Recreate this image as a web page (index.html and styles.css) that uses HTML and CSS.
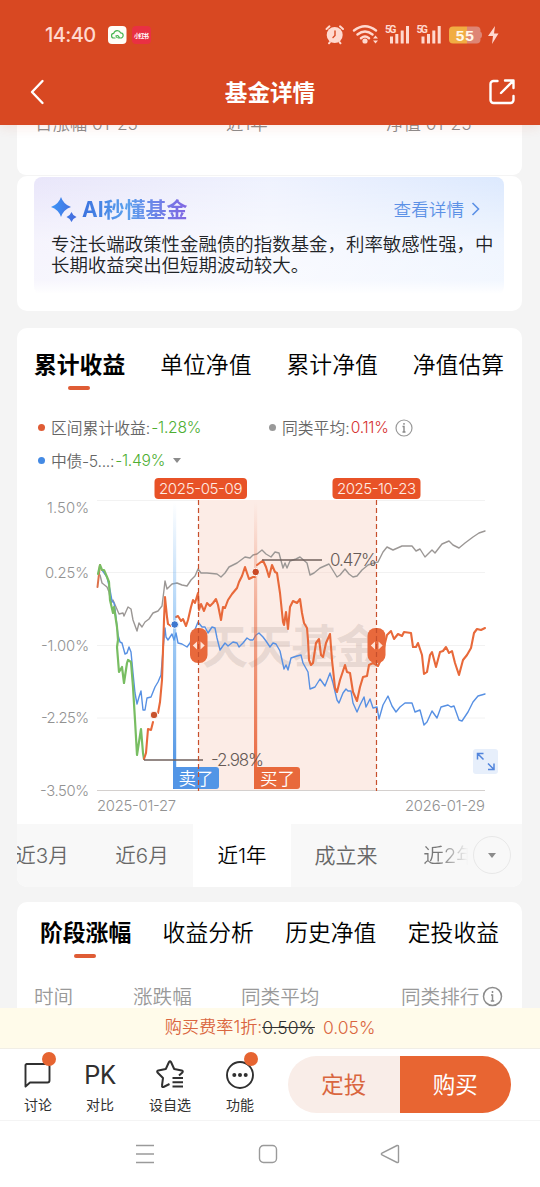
FILE: index.html
```html
<!DOCTYPE html>
<html lang="zh-CN">
<head>
<meta charset="utf-8">
<title>基金详情</title>
<link rel="stylesheet" href="styles.css">
</head>
<body>
<div class="screen">
  <header class="header">
    <div class="status">
      <span class="clock">14:40</span>
      <svg class="apps" width="44" height="20" viewBox="0 0 44 20">
        <rect x="0" y="1" width="18.500" height="18" rx="4" fill="#fffdf8"/>
        <path d="M7.500 13H6a2.300 2.300 0 0 1-.3-4.600a3.700 3.700 0 0 1 7-.5a2.500 2.500 0 0 1-.2 5.100h-2q-2.200 0-2.600-2q1.600-1.200 2.600.4l1 1.300" fill="none" stroke="#49b653" stroke-width="1.200"/>
        <rect x="24" y="1" width="19" height="18" rx="4" fill="#e93043"/>
        <text x="26" y="12.500" class="app-label" textLength="15">小红书</text>
      </svg>
      <svg class="signals" width="180" height="24" viewBox="320 23 180 24">
        <g fill="none" stroke="#ffd9cf" stroke-width="2" stroke-linecap="round">
          <circle cx="334.700" cy="35" r="8" fill="#ffd9cf" stroke="none"/>
          <path d="M326.500 29l3-2.700M343 29l-3-2.700M330 42l-1 1.300M339.500 42l1 1.300"/>
          <path d="M335 31v4.500l-2 2" stroke="#d84822" stroke-width="1.400"/>
          <path stroke-width="2.400" d="M354 30.500q11-8.500 22 0M357.500 34.500q7.500-6 15 0M361 38.200q4-3.200 8 0"/>
          <circle cx="365" cy="41" r="1.600" fill="#ffd9cf"/>
        </g>
        <g fill="#ffd9cf">
          <path d="M373 38.500l2.500-3 2.500 3zM373 40.500l2.500 3 2.500-3z"/>
          <rect x="390" y="36.500" width="3" height="7"/><rect x="395.300" y="34" width="3" height="9.500"/><rect x="400.700" y="30.500" width="3" height="13"/><rect x="406" y="26" width="3" height="17.500"/>
          <rect x="421.500" y="36.500" width="3" height="7"/><rect x="427" y="34" width="3" height="9.500"/><rect x="432.300" y="30.500" width="3" height="13"/><rect x="437.700" y="26" width="3" height="17.500"/>
          <text x="385" y="33" class="net" textLength="11.500">5G</text>
          <text x="416.500" y="33" class="net" textLength="11.500">5G</text>
          <path d="M495 26l-7 10h5l-1 8 6.500-10.500h-4.500z"/>
        </g>
        <path d="M467 26.500h9.500a4 4 0 0 1 4 4v1.500q1.500 0 1.500 3t-1.500 3v1.500a4 4 0 0 1-4 4H467z" fill="#de8675"/>
        <path d="M453 26.500h14v17h-14a4 4 0 0 1-4-4v-9a4 4 0 0 1 4-4z" fill="#f1ad43"/>
        <text x="455.800" y="40.700" class="battery" textLength="18">55</text>
      </svg>
    </div>
    <div class="titlebar">
      <svg width="16" height="26" viewBox="0 0 16 26"><path d="M13.500 2L3 13 13.500 24" fill="none" stroke="#fff" stroke-width="2.400" stroke-linecap="round" stroke-linejoin="round"/></svg>
      <h1>基金详情</h1>
      <svg width="26" height="26" viewBox="0 0 26 26"><path d="M8.500 2H4.500a3 3 0 0 0-3 3v16a3 3 0 0 0 3 3h17a3 3 0 0 0 3-3v-4M12 14L24 2M16 1.500h8.500V9" fill="none" stroke="#fff" stroke-width="2.400" stroke-linecap="round" stroke-linejoin="round"/></svg>
    </div>
  </header>

  <main class="content">
    <section class="card summary">
      <div class="summary-row"><span class="s1">日涨幅 01-25</span><span class="s2">近1年</span><span>净值 01-25</span></div>
    </section>

    <section class="card ai">
      <div class="ai-box">
        <div class="ai-head">
          <svg width="26" height="25" viewBox="0 0 26 25"><defs><linearGradient id="star"><stop stop-color="#3d96f7"/><stop offset="1" stop-color="#4569dc"/></linearGradient></defs><path d="M10 0q2.500 7.500 10 10-7.500 2.500-10 10-2.500-7.500-10-10 7.500-2.500 10-10zM20.500 15q1.300 3.700 5 5-3.700 1.300-5 5-1.300-3.700-5-5 3.700-1.300 5-5z" fill="url(#star)"/></svg>
          <strong>AI秒懂基金</strong>
          <span class="more">查看详情</span>
          <svg width="9" height="14" viewBox="0 0 9 14"><path d="M1.500 1l6 6-6 6" fill="none" stroke="#5c91e6" stroke-width="1.600"/></svg>
        </div>
        <p>专注长端政策性金融债的指数基金，利率敏感性强，中长期收益突出但短期波动较大。</p>
      </div>
    </section>

    <section class="card performance">
      <nav class="tabs">
        <span class="active">累计收益</span><span>单位净值</span><span>累计净值</span><span>净值估算</span>
      </nav>
      <div class="legend">
        <div class="legend-item first"><i class="dot red"></i><span>区间累计收益:</span><b class="down">-1.28%</b></div>
        <div class="legend-item"><i class="dot gray"></i><span>同类平均:</span><b class="up">0.11%</b>
          <svg class="info" width="18" height="18" viewBox="0 0 18 18"><circle cx="9" cy="9" r="8" fill="none" stroke="#999" stroke-width="1.200"/><path d="M7.500 7.500H9V13M7.500 13h3M9 4v1.700" fill="none" stroke="#888" stroke-width="1.400"/></svg>
        </div>
      </div>
      <div class="legend second">
        <div class="legend-item"><i class="dot blue"></i><span class="bond">中债-5...:</span><b class="down">-1.49%</b><i class="caret"></i></div>
      </div>
      <svg class="chart" width="505" height="349" viewBox="17 475 505 349">
        <defs>
          <linearGradient id="sell" x1="0" y1="0" x2="0" y2="1"><stop stop-color="#58a4ee" stop-opacity="0"/><stop offset=".4" stop-color="#58a4ee" stop-opacity=".5"/><stop offset="1" stop-color="#458be0"/></linearGradient>
          <linearGradient id="buy" x1="0" y1="0" x2="0" y2="1"><stop stop-color="#e8643a" stop-opacity="0"/><stop offset=".4" stop-color="#e8643a" stop-opacity=".5"/><stop offset="1" stop-color="#e8643a"/></linearGradient>
        </defs>
        <path d="M97 500.500H485M97 572.500H485M97 645.500H485M97 718H485" stroke="#f2f2f2" fill="none"/>
        <rect x="198.500" y="500" width="178" height="290" fill="#fcece6"/>
        <path d="M199 572.500H376M199 645.500H376M199 718H376" stroke="#f5e3dd" fill="none"/>
        <path d="M97 790.500H485" stroke="#d4d0ce"/>
        <text class="watermark" x="202" y="663" textLength="180">天天基金</text>
        <g class="axis">
          <text x="47" y="512.500" textLength="42">1.50%</text>
          <text x="45" y="578" textLength="44">0.25%</text>
          <text x="41" y="650.500" textLength="48">-1.00%</text>
          <text x="41" y="723" textLength="48">-2.25%</text>
          <text x="40" y="795.500" textLength="49">-3.50%</text>
          <text x="97" y="810.500" textLength="79">2025-01-27</text>
          <text x="405" y="810.500" textLength="80">2026-01-29</text>
        </g>
        <g fill="none" stroke-linejoin="round" stroke-linecap="round">
          <polyline stroke="#9b9795" stroke-width="1.400" points="100,575 102,583 107,587 109,592 111,603 113,600 116,607 119,614 123,613 124,616 128,607 131,609 133,620 137,631 139,623 142,627 145,622 149,619 153,613 158,611 162,606 164,590 165,581 167,589 172,584 177,583 182,585 187,586 191,580 195,576 198,569 201,573 207,573 217,574 221,577 225,573 229,567 237,563 245,557 250,558 253,555 257,554 262,550 266,554 271,557 275,552 279,553 283,568 285,563 287,568 290,561 296,559 300,557 307,563 310,575 314,573 320,568 329,564 337,577 340,575 345,569 349,574 353,577 357,576 362,570 368,565 374,563 378,562 383,552 387,547 393,550 402,546 412,546 416,551 420,549 425,557 432,550 435,553 442,544 449,541 453,545 459,548 465,543 473,537 479,533 485,531"/>
          <polyline stroke="#5790e3" stroke-width="1.400" points="102,570 107,577 110,590 112,601 114,603 115,609 118,635 120,642 122,643 125,654 127,653 129,647 131,652 133,673 135,693 137,704 139,697 141,691 143,710 145,710 147,698 151,697 155,687 158,682 161,675 163,650 165,628 166,637 168,640 172,634 174,640 176,633 178,643 182,644 187,647 190,643 194,632 198,622 202,627 205,627 208,633 212,627 215,628 217,638 220,650 225,643 228,646 233,642 237,643 239,647 243,643 247,638 250,640 253,640 256,635 259,633 263,637 266,641 270,647 273,643 276,644 280,651 284,669 286,665 288,670 291,658 297,656 301,655 303,663 308,672 310,689 315,687 320,679 325,686 330,673 333,683 337,700 339,703 343,693 346,689 348,691 351,691 353,703 357,712 360,705 364,697 366,707 370,699 373,708 377,707 379,719 383,705 388,696 392,706 396,712 400,707 405,703 412,703 415,712 420,710 424,725 427,722 432,711 437,718 441,707 448,705 451,707 454,706 459,720 462,721 468,712 473,702 478,696 485,694"/>
          <polyline stroke="#dd714b" stroke-width="2" points="97.500,587 100,565"/>
          <polyline stroke="#78bd62" stroke-width="2.200" points="98,574 100,565 102,570 104,570 107,577 109,582 110,600 113,613 114,607 117,627 118,640 117,647 119,672 122,667 124,683 127,663 128,660 131,662 133,687 135,720 137,755 139,742 141,729 143,753 144,759"/>
          <g stroke="#e8693a" stroke-width="2.100">
            <polyline points="144,759 146,753 148,729 151,730 153,722"/>
            <polyline points="158,713 160,702 162,680 163,650 164,620 165,597 167,617 168,624 171,626"/>
            <polyline points="176,617 178,616 181,621 183,619 186,626 188,620 191,607 193,600 195,603 198,593 199,610 201,604 204,611 207,603 210,606 213,603 216,599 218,605 221,620 223,607 225,608 228,600 232,594 237,588 239,582 242,576 245,567 249,579 253,577 255,577"/>
            <polyline points="257,565 263,560.500 266,567 269,577 272,565 275,572 277,573 280,593 283,622 284,625 286,612 288,629 290,607 293,601 297,603 300,599 302,613 304,623 307,628 308,640 309,660 311,665 313,663 316,643 319,639 321,655 323,657 326,643 330,634 332,660 335,688 337,692 340,680 345,665 347,672 350,673 353,692 357,701 360,687 363,677 367,676 369,665 373,663 378,666 382,657 385,643 387,635 391,631 394,639 398,634 402,636 404,632 411,633 413,647 416,647 418,643 422,655 424,674 427,672 430,655 432,652 436,667 440,652 443,651 446,647 449,653 452,651 455,663 459,675 463,660 467,655 471,648 474,633 477,629 481,630 485,628"/>
          </g>
        </g>
        <rect x="173" y="502" width="3.200" height="287" fill="url(#sell)"/>
        <rect x="254" y="502" width="3.200" height="287" fill="url(#buy)"/>
        <g stroke="#fff" stroke-width="1"><circle cx="154" cy="715" r="3.800" fill="#c8532d"/><circle cx="174.700" cy="624.500" r="3.800" fill="#3e78cf"/><circle cx="255.700" cy="572" r="3.800" fill="#c94825"/></g>
        <path d="M144 760H203M262 560H322" stroke="#71625d" stroke-width="1.500"/>
        <g class="callout"><text x="211" y="766" textLength="53">-2.98%</text><text x="330" y="565.500" textLength="47">0.47%</text></g>
        <path d="M173 767h43a3 3 0 0 1 3 3v16a3 3 0 0 1-3 3h-40a3 3 0 0 1-3-3z" fill="#5295e6"/>
        <path d="M254 767h43a3 3 0 0 1 3 3v16a3 3 0 0 1-3 3h-40a3 3 0 0 1-3-3z" fill="#e8693c"/>
        <text class="flag" x="178.500" y="785" textLength="35">卖了</text>
        <text class="flag" x="260" y="785" textLength="35">买了</text>
        <g>
          <rect x="190" y="628" width="17.500" height="35" rx="8" fill="#e8693c"/>
          <rect x="367.500" y="628" width="18" height="35" rx="8" fill="#e8693c"/>
          <path d="M198.500 500V791M376.500 500V791" stroke="#c74f2c" stroke-width="1.200" stroke-dasharray="5 3"/>
          <path d="M197 641.500v8l-4.200-4zM200.500 641.500v8l4.200-4zM375 641.500v8l-4.200-4zM378.500 641.500v8l4.200-4z" fill="#ffe2d5"/>
          <rect x="154.500" y="478" width="92.500" height="21" rx="4" fill="#e85227"/>
          <rect x="332.500" y="478" width="88" height="21" rx="4" fill="#e85227"/>
        </g>
        <text class="date" x="159" y="494" textLength="83.500">2025-05-09</text>
        <text class="date" x="337" y="494" textLength="79">2025-10-23</text>
        <rect x="473" y="749" width="25" height="25" rx="3" fill="#e7effb"/>
        <path d="M477.500 759.500v-6h6M478 754l5.500 5.500M494 763.500v6h-6M493.500 769l-5.500-5.500" stroke="#5285dc" stroke-width="1.500" fill="none"/>
      </svg>
      <div class="ranges">
        <span class="r1">近3月</span><span class="r2">近6月</span><span class="r3">近1年</span><span class="r4">成立来</span><span class="r5">近2年</span>
        <button class="expand" aria-label="更多"><i class="caret"></i></button>
      </div>
    </section>

    <section class="card stages">
      <nav class="tabs stage-tabs">
        <span class="active">阶段涨幅</span><span>收益分析</span><span>历史净值</span><span>定投收益</span>
      </nav>
      <div class="table-head"><span class="c1">时间</span><span class="c2">涨跌幅</span><span class="c3">同类平均</span><span class="c4">同类排行</span>
        <svg width="21" height="21" viewBox="0 0 21 21"><circle cx="10.500" cy="10.500" r="9" fill="none" stroke="#8c8c8c" stroke-width="1.500"/><path d="M9 9h1.500v6M8.800 15h3.400M10.500 5v2" fill="none" stroke="#8c8c8c" stroke-width="1.500"/></svg>
      </div>
    </section>
  </main>

  <div class="fee"><span>购买费率1折:</span><s>0.50%</s><span class="rate">0.05%</span></div>

  <div class="actions">
    <div class="tool discuss"><svg width="30" height="32" viewBox="0 0 30 32"><path d="M3.500 5h21a2 2 0 0 1 2 2v14.500a2 2 0 0 1-2 2H7l-4.500 4V6z" fill="none" stroke="#303030" stroke-width="1.900" stroke-linejoin="round"/></svg><span>讨论</span><i class="badge"></i></div>
    <div class="tool compare"><strong>PK</strong><span>对比</span></div>
    <div class="tool watch"><svg width="30" height="32" viewBox="0 0 30 32"><path d="M15.500 28l-6 3q-1.800.3-1.500-1.500l1-7.500-5.500-5.500q-1-1.500.8-2l7.500-1.500L15 6q1-1.500 2 0l3.200 7 7.500 1.500q1.800.5.7 2L25 19.500M18.500 22H29M18.500 26.200H29M18.500 30.500H29" transform="translate(-1 -3)" fill="none" stroke="#303030" stroke-width="2" stroke-linejoin="round"/></svg><span>设自选</span></div>
    <div class="tool features"><svg width="30" height="32" viewBox="0 0 30 32"><circle cx="15" cy="16" r="13" fill="none" stroke="#303030" stroke-width="1.900"/><g fill="#303030"><circle cx="9.300" cy="16" r="2"/><circle cx="15" cy="16" r="2"/><circle cx="20.700" cy="16" r="2"/></g></svg><span>功能</span><i class="badge"></i></div>
    <div class="buttons"><button class="invest">定投</button><button class="buy">购买</button></div>
  </div>

  <div class="system-nav">
    <svg width="20" height="20" viewBox="0 0 20 20"><path d="M1 1.500h18M1 10h18M1 18.500h18"/></svg>
    <svg width="20" height="20" viewBox="0 0 20 20"><rect x="1.500" y="1.500" width="17" height="17" rx="4"/></svg>
    <svg width="20" height="20" viewBox="0 0 20 20"><path d="M17 1.500L2 9q-1.300 1 0 2l15 7.500q1.500.3 1.500-1V2.500q0-1.300-1.500-1z"/></svg>
  </div>
</div>
</body>
</html>
```
FILE: styles.css
```css
* { box-sizing: border-box; }
body { margin: 0; background: #f4f4f4; font-family: Inter, "Noto Sans CJK SC", sans-serif; font-weight: 350; color: #000; }
svg { display: block; flex: none; }
button { border: 0; padding: 0; font: inherit; }
.screen { width: 540px; height: 1187px; overflow: hidden; display: flex; flex-direction: column; }
.header { height: 125px; flex: none; background: #d84822; box-shadow: 0 1px 12px #d8482224; z-index: 1; }
.status { height: 70px; padding: 0 40px 0 45px; display: flex; align-items: center; }
.clock { width: 63px; font-size: 20px; font-weight: 500; letter-spacing: -.6px; color: #ffd9cf; }
.signals { margin-left: auto; }
.app-label { font: 700 6px "Noto Sans CJK SC", sans-serif; fill: #fff; }
.net { font: 700 10.5px Roboto, sans-serif; }
.battery { font: 700 15.5px "Liberation Sans", sans-serif; fill: #fff7e8; }
.titlebar { height: 44px; padding: 0 25px 0 29px; display: flex; align-items: center; justify-content: space-between; }
.titlebar h1 { margin: 2px 0 0 6px; color: #fff; font-size: 22.6px; line-height: 32px; font-weight: 700; }

.content { height: 883px; flex: none; padding: 0 18px 0 17px; overflow: hidden; }
.card { background: #fff; border-radius: 10px; }
.summary { height: 50px; border-radius: 0 0 9px 9px; overflow: hidden; }
.summary-row { display: flex; margin-top: -13px; padding-left: 18px; font-size: 17.4px; line-height: 24px; color: #8c8c8c; }
.s1 { width: 191px; }
.s2 { width: 160px; }
.ai { height: 135px; margin-top: 1px; padding: 1px 18px 0 17px; }
.ai-box { height: 117px; padding: 20px 0 0 17px; border-radius: 8px; background: linear-gradient(#fff0, #ffffff90 55%, #ffffffa0 88%, #fff), linear-gradient(90deg, #e9e6fa, #eff2fe 50%, #dce9fe); }
.ai-head { height: 25px; display: flex; align-items: center; }
.ai-head strong { flex: 1; margin-left: 5px; font-size: 21px; font-weight: 700; line-height: 25px; color: transparent; background: linear-gradient(90deg, #3b72df, #5aa0ed 45px, #8165e2 106px); background-clip: text; }
.more { margin: -3px 7px 0 0; font-size: 17.6px; color: #5c91e6; }
.ai-head > svg:last-child { margin: -2px 24px 0 0; }
.ai p { width: 446px; margin: 11.500px 0 0; font-size: 18.45px; line-height: 21.5px; color: #202326; }

.performance { height: 559px; margin-top: 17px; overflow: hidden; }
.tabs { height: 82px; padding: 20px 18px 0 17px; display: flex; justify-content: space-between; font-size: 22.8px; line-height: 34px; }
.tabs span { position: relative; height: 34px; }
.tabs .active { font-weight: 700; }
.tabs .active::after { content: ""; position: absolute; width: 22px; height: 4px; left: calc(50% - 11.500px); top: 38px; border-radius: 2px; background: #df5c35; }
.legend { height: 35px; padding-left: 21px; display: flex; font-size: 15.8px; color: #666; }
.legend.second { height: 30px; }
.legend-item { height: 35px; display: flex; align-items: center; }
.first { width: 231px; }
.legend.second .legend-item { height: 31px; }
.legend b { font-size: 15.6px; letter-spacing: -.25px; font-weight: 350; }
.legend span { margin-right: 1px; }
.legend .bond { letter-spacing: -.3px; }
.down { color: #4eae32; }
.up { color: #d63131; }
.dot { width: 7px; height: 7px; margin-right: 6px; border-radius: 50%; }
.dot.red { background: #df5c35; }
.dot.gray { background: #999; }
.dot.blue { background: #448ae4; }
.info { margin-left: 6px; }
.caret { width: 0; border: 4.5px solid transparent; border-top: 5.500px solid #8b8b8b; border-bottom: 0; }
.legend .caret { margin-left: 8px; }
.axis { font-size: 14.8px; fill: #929292; }
.callout { font-size: 17px; fill: #665a56; }
.date { font-size: 15px; fill: #ffece4; }
.flag { font-size: 17.500px; fill: #fff; }
.watermark { font: 700 46px "Noto Sans CJK SC", sans-serif; fill: #806e6829; }
.ranges { position: relative; height: 63px; display: flex; align-items: stretch; overflow: hidden; background: #f8f8f8; font-size: 20.5px; line-height: 64px; color: #676767; white-space: nowrap; }
.ranges span { flex: none; text-align: center; }
.r1 { width: 75px; margin-left: -12px; padding-right: 1px; }
.r2 { width: 113px; padding-right: 13px; padding-left: 24px; }
.ranges .r3 { width: 98px; background: #fff; color: #000; }
.r4 { width: 110px; font-size: 21px; }
.r5 { width: 70px; margin-left: 14px; background: linear-gradient(90deg, #777 35%, #f8f8f8 76%); background-clip: text; color: transparent; }
.expand { position: absolute; display: grid; place-items: center; left: 456px; top: 12px; width: 38px; height: 38px; border: 1px solid #e8e8e8; border-radius: 50%; background: #f8f8f8; }
.stages { height: 120px; margin-top: 15px; }
.stage-tabs { height: 78px; padding: 14px 23px 0; }
.table-head { display: flex; padding-left: 17px; font-size: 19.6px; line-height: 34px; color: #999; }
.c1 { width: 99px; }
.c2 { width: 108px; }
.c3 { width: 160px; }
.table-head svg { margin-top: 6px; margin-left: 3px; }

.fee { height: 41px; flex: none; display: flex; justify-content: center; align-items: center; border-bottom: 1px solid #f1eee6; background: #fffbea; font-size: 17.2px; line-height: 26px; color: #da6640; }
.fee s { color: #303030; }
.fee s, .rate { font-size: 17.5px; }
.fee > span:first-child { margin-top: -2px; }
.rate { margin-left: 8px; }
.actions { height: 72px; flex: none; padding-left: 10px; background: #fff; display: flex; border-bottom: 1px solid #f4f4f4; }
.tool { position: relative; width: 56px; padding-top: 10px; display: flex; flex-direction: column; align-items: center; font-size: 14px; line-height: 22px; color: #303030; }
.tool > span { margin-top: 3px; font-weight: 400; }
.tool strong { height: 32px; font: 400 25px/34px Roboto, sans-serif; }
.compare { margin-left: 6px; }
.watch { margin-left: 14px; }
.features { margin-left: 14px; }
.badge { position: absolute; right: 10.500px; top: 3px; width: 14px; height: 14px; border-radius: 50%; background: #e66431; }
.buttons { margin: 7px 29px 0 auto; width: 223px; height: 57px; display: flex; border-radius: 29px; overflow: hidden; font-size: 22.5px; }
.buttons button { flex: 1; padding-bottom: 3px; font-weight: 400; }
.invest { background: #f9ede8; color: #d9663f; }
.buy { background: #e86532; color: #fff; }
.system-nav { flex: 1; padding: 23px 140px 0 135px; background: #fff; display: flex; justify-content: space-between; }
.system-nav svg { fill: none; stroke: #9a9a9a; stroke-width: 1.4; }
```
